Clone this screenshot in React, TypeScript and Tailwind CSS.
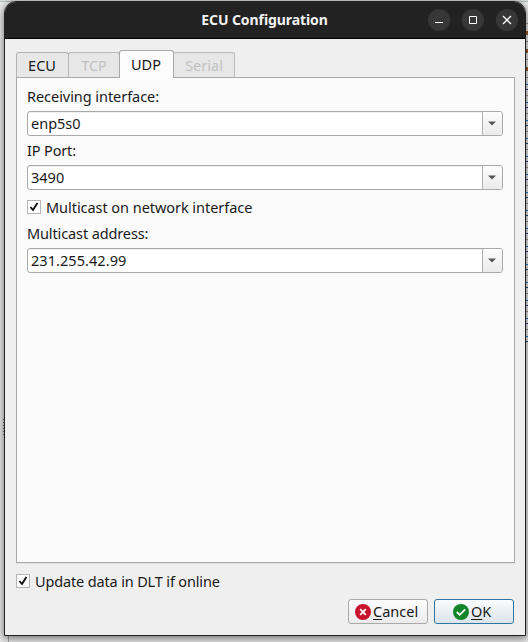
import type { ReactNode } from 'react';

function Check() {
  return (
    <span className="flex h-[14px] w-[14px] shrink-0 items-center justify-center border border-[#b4b4b4] bg-white">
      <svg width="10" height="10" viewBox="0 0 10 10" fill="none" stroke="#111" strokeWidth="1.9">
        <path d="M1.4 5 L4 8 L8.4 1" />
      </svg>
    </span>
  );
}

function Combo({ children }: { children: ReactNode }) {
  return (
    <div className="flex h-[25px] w-[476px] overflow-hidden rounded-[3px] border border-[#a9a9a9] bg-white shadow-[inset_0_1px_0_#f0f0f0]">
      <div className="flex-1 pl-[3px] leading-[23px]">{children}</div>
      <div className="flex w-[20px] items-start justify-center border-l border-[#b0b0b0] bg-gradient-to-b from-[#fdfdfd] to-[#ebebeb] pr-[2px] pt-[9px]">
        <svg width="8" height="5" viewBox="0 0 8 5" fill="#555"><path d="M0 0.4H8L4 4.6Z" /></svg>
      </div>
    </div>
  );
}

function Tab({ label, className }: { label: ReactNode; className: string }) {
  return <div className={`rounded-t-[3px] border border-b-0 text-center ${className}`}>{label}</div>;
}

function Round({ children }: { children: ReactNode }) {
  return <span className="flex h-[22px] w-[22px] items-center justify-center rounded-full bg-[#373737]">{children}</span>;
}

const rows = Array.from({ length: 18 }, (_, i) => i);

export default function App() {
  return (
    <div className="relative h-[642px] w-[528px] overflow-hidden bg-[#efefef] font-['Noto_Sans',sans-serif] text-[14.5px] text-[#1a1a1a]">
      <div className="absolute left-0 top-0 h-[2px] w-full border-b border-[#b9bdbb] bg-[#dce2df]" />
      <div className="absolute bottom-0 left-[8px] h-[7px] w-px bg-[#aaa]" />
      <div className="absolute right-0 top-[23px] w-[2px]">
        {rows.map((i) => (
          <div key={i} className="h-[18px] border-t border-[#999] pt-[6px]">
            {i < 3 ? (
              <div className="mt-px h-[4px] bg-[#a45b25]" />
            ) : (
              <div className="flex h-[6px] flex-col justify-between">
                <div className="h-px bg-[#2f6fd0]" />
                <div className="h-px bg-[#344f80]" />
              </div>
            )}
          </div>
        ))}
      </div>
      <div className="absolute left-[3px] top-[419px] flex w-px flex-col gap-[2px]">
        {rows.slice(0, 6).map((i) => <i key={i} className="h-px bg-[#777]" />)}
      </div>

      <div className="absolute left-[4px] top-[1px] flex h-[635px] w-[522px] flex-col overflow-hidden rounded-t-[12px] border border-[#222] bg-[#efefef] shadow-[0_2px_9px_1px_rgba(0,0,0,0.5)]">
        <header className="flex h-[37px] shrink-0 items-center border-b border-black bg-[#222]">
          <div className="w-[423px] pl-[96px] text-center text-[14px] font-bold leading-[36px] tracking-[-0.08px] text-[#f2f2f2]">ECU Configuration</div>
          <div className="flex gap-[12px]">
            <Round><svg width="10" height="10" stroke="#fff" strokeWidth="1"><path d="M1 7.5H9" /></svg></Round>
            <Round><svg width="10" height="10" fill="none" stroke="#fff" strokeWidth="1"><path d="M1.5 1.5H8.5V8.5H1.5Z" /></svg></Round>
            <Round><svg width="10" height="10" stroke="#fff" strokeWidth="1.3"><path d="M1 1L9 9M9 1L1 9" /></svg></Round>
          </div>
        </header>

        <nav className="ml-[11px] mt-[11px] flex h-[28px] items-end">
          <Tab label="ECU" className="h-[26px] w-[53px] border-[#b2b2b2] bg-[#e7e7e7] pr-px leading-[25px]" />
          <Tab label="TCP" className="-ml-px h-[26px] w-[52px] border-[#b9b9b9] bg-[#e7e7e7] leading-[25px] text-[#c1c1c1]" />
          <Tab label="UDP" className="relative z-10 -ml-px h-[28px] w-[55px] border-[#a9a9a9] bg-[#fcfcfc] pr-px leading-[27px]" />
          <Tab label="Serial" className="-ml-px h-[26px] w-[62px] border-[#b9b9b9] bg-[#e7e7e7] leading-[25px] text-[#c1c1c1]" />
        </nav>

        <main className="-mt-px ml-[11px] h-[486px] w-[499px] shrink-0 border border-[#a9a9a9] bg-[#fbfbfb] pl-[10px] pt-[8px] shadow-[0_1px_0_#e2e2e2]">
          <div className="h-[25px] leading-[20px] tracking-[-0.05px]">Receiving interface:</div>
          <Combo>enp5s0</Combo>
          <div className="h-[29px] pt-[4px] leading-[20px] tracking-[-0.15px]">IP Port:</div>
          <Combo>3490</Combo>
          <div className="flex h-[34px] items-center gap-[5px] tracking-[-0.05px]"><Check /><span className="pt-[2px]">Multicast on network interface</span></div>
          <div className="h-[24px] leading-[18px] tracking-[-0.12px]">Multicast address:</div>
          <Combo><span className="tracking-[0.06px]">231.255.42.99</span></Combo>
        </main>

        <div className="ml-[11px] mt-[8px] flex h-[20px] items-center gap-[5px] tracking-[-0.15px]"><Check /><span className="pt-[2px]">Update data in DLT if online</span></div>
        <footer className="mr-[11px] mt-[8px] flex justify-end gap-[6px]">
          <button className="flex h-[25px] w-[80px] items-center gap-[2px] rounded-[3px] border border-[#a9a9a9] bg-gradient-to-b from-[#fdfdfd] to-[#ebebeb] pl-[6px]">
            <svg width="16" height="16" viewBox="0 0 16 16"><circle cx="8" cy="8" r="8" fill="#c9142d" /><path d="M5.2 5.2L10.8 10.8M10.8 5.2L5.2 10.8" stroke="#fff" strokeWidth="1.9" /></svg>
            <span><u className="underline-offset-2">C</u>ancel</span>
          </button>
          <button className="flex h-[25px] w-[80px] items-center gap-[2px] rounded-[3px] border border-[#2b76a5] bg-gradient-to-b from-[#fbfcfd] to-[#dce4eb] pl-[18px]">
            <svg width="16" height="16" viewBox="0 0 16 16"><circle cx="8" cy="8" r="8" fill="#128429" /><path d="M3.8 8L6.7 10.8L12.2 5.3" fill="none" stroke="#fff" strokeWidth="1.8" /></svg>
            <span><u className="underline-offset-2">O</u>K</span>
          </button>
        </footer>
      </div>
    </div>
  );
}
